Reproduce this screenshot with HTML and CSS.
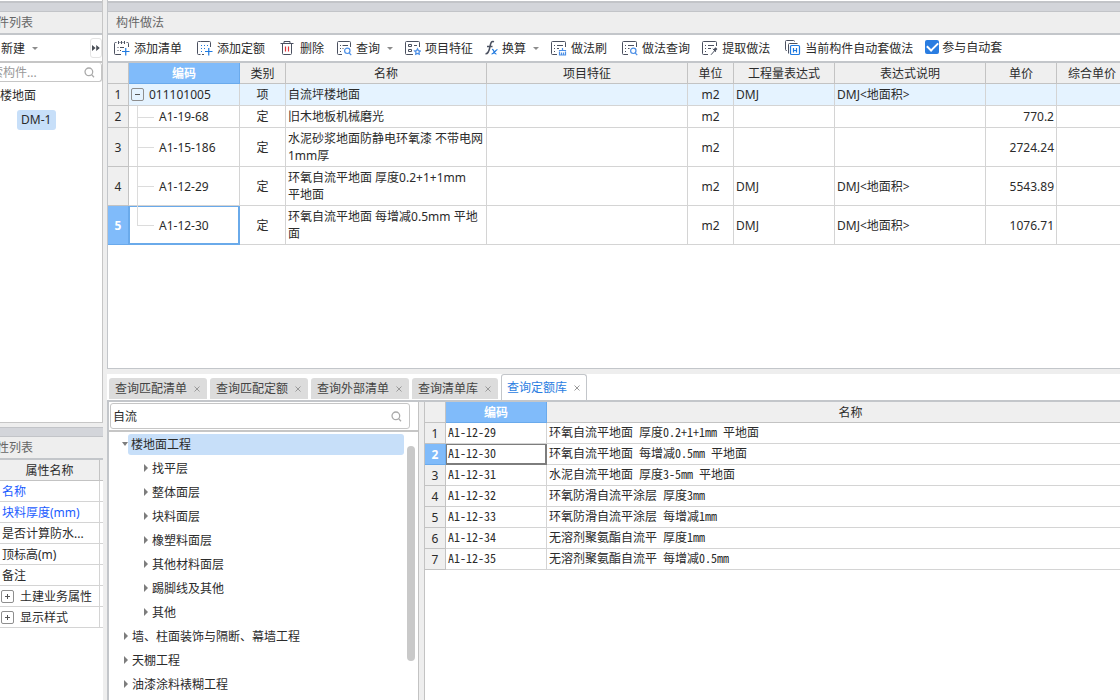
FILE: index.html
```html
<!DOCTYPE html>
<html lang="zh-CN">
<head>
<meta charset="utf-8">
<title>构件做法</title>
<link rel="stylesheet" href="styles.css">
</head>
<body>
<div class="app">
  <aside class="side">
    <section class="panel components">
      <div class="strip"></div>
      <h2 class="panel-title clipped">件列表</h2>
      <div class="new-row">
        <button class="tool" type="button">新建<span class="caret"></span></button>
        <button class="more" type="button" aria-label="更多"><svg width="8" height="6" viewBox="0 0 8 6"><path d="M0 0l3.6 3L0 6zM4.2 0l3.6 3-3.6 3z" fill="#4a4f57"/></svg></button>
      </div>
      <div class="side-search">
        <input type="text" placeholder="索构件..." aria-label="搜索构件">
        <svg width="11" height="11" viewBox="0 0 12 12" fill="none" stroke="#aaa" stroke-width="1.4"><circle cx="5.3" cy="5.3" r="4.2"/><path d="M8.3 8.3l2.6 2.9"/></svg>
      </div>
      <ul class="component-tree">
        <li>楼地面</li>
        <li class="child"><span class="picked">DM-1</span></li>
      </ul>
    </section>
    <section class="panel properties">
      <div class="strip low"></div>
      <h2 class="panel-title clipped">性列表</h2>
      <table class="prop-table">
        <thead><tr><th>属性名称</th><th class="rest"></th></tr></thead>
        <tbody>
          <tr><td class="key">名称</td><td></td></tr>
          <tr><td class="key">块料厚度(mm)</td><td></td></tr>
          <tr><td>是否计算防水...</td><td></td></tr>
          <tr><td>顶标高(m)</td><td></td></tr>
          <tr><td>备注</td><td></td></tr>
          <tr><td><div class="group"><button class="toggle plus" type="button" aria-label="展开"></button>土建业务属性</div></td><td></td></tr>
          <tr><td><div class="group"><button class="toggle plus" type="button" aria-label="展开"></button>显示样式</div></td><td></td></tr>
        </tbody>
      </table>
    </section>
  </aside>

  <main class="main">
    <section class="panel methods">
      <div class="strip"></div>
      <h2 class="panel-title">构件做法</h2>
      <div class="toolbar">
        <button class="tool wide" type="button"><svg class="ico" viewBox="0 0 16 16"><path d="M2.500 2.500h-1a1 1 0 0 0-1 1v10a1 1 0 0 0 1 1H7M12.500 2.500h1a1 1 0 0 1 1 1V7M4.500 1v3M7.500 1v3M10.500 1v3M5.500 2.500h1M8.500 2.500h1"/><path d="M3.500 7.500h1M6 7.500h4M3.500 10.500h1M6 10.500h1"/><path class="b" d="M8 11.500h7.500M11.750 8v7.500"/></svg>添加清单</button>
        <button class="tool wide" type="button"><svg class="ico" viewBox="0 0 16 16"><path d="M3.500 1.500h-2a1 1 0 0 0-1 1v11a1 1 0 0 0 1 1h2M5 14.500h2M3.500 1.500h9a1 1 0 0 1 1 1V7"/><path class="b" d="M4 5.500h1M7 5.500h1M10 5.500h1M4 8.500h1M7 8.500h1M4 11.500h1M8 11.500h7.500M11.750 8v7.500"/></svg>添加定额</button>
        <button class="tool" type="button"><svg class="ico" viewBox="0 0 16 16"><path d="M.500 3.500h13M4 3.500V1.500h6v2M2.500 3.500v10a1 1 0 0 0 1 1h7a1 1 0 0 0 1-1v-10"/><path class="r" d="M5.500 6.500v5M8.500 6.500v5"/></svg>删除</button>
        <button class="tool" type="button"><svg class="ico" viewBox="0 0 16 16"><path d="M6 14.500H2.500a1 1 0 0 1-1-1v-11a1 1 0 0 1 1-1h11a1 1 0 0 1 1 1V7M4 5.500h1M6.500 5.500h5.500M4 8.500h1M6.500 8.500h1M4 11.500h1"/><circle class="l" cx="11.300" cy="10.800" r="2.700"/><path class="l" d="M13.200 12.800l2 2.400"/></svg>查询<span class="caret"></span></button>
        <button class="tool" type="button"><svg class="ico" viewBox="0 0 16 16"><path d="M8 14.500H1.500a1 1 0 0 1-1-1v-11a1 1 0 0 1 1-1h12a1 1 0 0 1 1 1V7M3.500 4.500h3v2h-3zM3.500 9.500h3v2h-3zM9 5.500h3"/><path class="l" d="M12.500 8.800l.9 1.800 2 .3-1.400 1.400.3 2-1.800-.9-1.800.9.300-2-1.400-1.400 2-.3z"/></svg>项目特征</button>
        <button class="tool" type="button"><svg class="ico fx" viewBox="0 0 13 16"><path d="M9 1.800C6.300.8 5.600 3 5 6.500S3.500 14 .500 13.800M2 6.500h5.500"/><path class="b" d="M7 9.500c2-.8 2 5 4.500 4.500M12.500 9.500c-1.500 0-4 4.800-6 4.500"/></svg>换算<span class="caret"></span></button>
        <button class="tool wide" type="button"><svg class="ico" viewBox="0 0 16 16"><path d="M6 14.500H1.500a1 1 0 0 1-1-1v-11a1 1 0 0 1 1-1h12a1 1 0 0 1 1 1V7M3 5.500h1M6 5.500h6M3 8.500h1M6 8.500h2M3 11.500h1"/><path class="l" d="M11.500 8v2.500M8.500 11.500v-1h6v1M8.500 12v3h6v-3M10.500 12.500V15M12.500 12.500V15"/></svg>做法刷</button>
        <button class="tool" type="button"><svg class="ico" viewBox="0 0 16 16"><path d="M6 14.500H1.500a1 1 0 0 1-1-1v-11a1 1 0 0 1 1-1h12a1 1 0 0 1 1 1V7M3 5.500h1M6 5.500h6M3 8.500h1M6 8.500h1.500M3 11.500h1"/><circle class="l" cx="11.300" cy="10.800" r="2.700"/><path class="l" d="M13.200 12.800l2 2.400"/></svg>做法查询</button>
        <button class="tool wide" type="button"><svg class="ico" viewBox="0 0 16 16"><path d="M6 14.500H1.500a1 1 0 0 1-1-1v-11a1 1 0 0 1 1-1h12a1 1 0 0 1 1 1V6M3 5.500h1M6 5.500h6M3 8.500h1M6 8.500h3M3 11.500h1M9 14.800l3.500-4M10.800 8.800l3.200 3"/><path d="M12.200 10.500l2.300-2.300" stroke-width="2.600"/></svg>提取做法</button>
        <button class="tool" type="button"><svg class="ico" viewBox="0 0 16 16"><path d="M2 10.500h-.500a1 1 0 0 1-1-1v-8a1 1 0 0 1 1-1h7a1 1 0 0 1 1 1M3.500 13.500v-9a1 1 0 0 1 1-1h8"/><path class="b" d="M6.500 5.500h7a1 1 0 0 1 1 1v7a1 1 0 0 1-1 1h-7a1 1 0 0 1-1-1v-7a1 1 0 0 1 1-1zM8.500 8v4.500M11.500 8v4.500M8.500 10.500h3"/></svg>当前构件自动套做法</button>
        <label class="check"><input type="checkbox" checked>参与自动套</label>
      </div>
      <div class="grid-wrap">
        <table class="method-table">
          <colgroup><col class="c-num"><col class="c-code"><col class="c-unit"><col class="c-name"><col class="c-name"><col class="c-unit"><col class="c-expr"><col class="c-desc"><col class="c-price"><col class="c-price"></colgroup>
          <thead>
            <tr><th></th><th class="on">编码</th><th>类别</th><th>名称</th><th>项目特征</th><th>单位</th><th>工程量表达式</th><th>表达式说明</th><th>单价</th><th>综合单价</th></tr>
          </thead>
          <tbody>
            <tr class="parent"><th>1</th><td><div class="root-code"><button class="toggle" type="button" aria-label="折叠"></button>011101005</div></td><td class="mid">项</td><td>自流坪楼地面</td><td></td><td class="mid">m2</td><td>DMJ</td><td>DMJ&lt;地面积&gt;</td><td></td><td></td></tr>
            <tr><th>2</th><td class="leaf">A1-19-68</td><td class="mid">定</td><td>旧木地板机械磨光</td><td></td><td class="mid">m2</td><td></td><td></td><td class="num">770.2</td><td></td></tr>
            <tr class="tall"><th>3</th><td class="leaf">A1-15-186</td><td class="mid">定</td><td>水泥砂浆地面防静电环氧漆 不带电网 1mm厚</td><td></td><td class="mid">m2</td><td></td><td></td><td class="num">2724.24</td><td></td></tr>
            <tr class="tall"><th>4</th><td class="leaf">A1-12-29</td><td class="mid">定</td><td>环氧自流平地面 厚度0.2+1+1mm <span class="keep">平地面</span></td><td></td><td class="mid">m2</td><td>DMJ</td><td>DMJ&lt;地面积&gt;</td><td class="num">5543.89</td><td></td></tr>
            <tr class="tall"><th class="on">5</th><td class="leaf last focus">A1-12-30</td><td class="mid">定</td><td>环氧自流平地面 每增减0.5mm 平地面</td><td></td><td class="mid">m2</td><td>DMJ</td><td>DMJ&lt;地面积&gt;</td><td class="num">1076.71</td><td></td></tr>
          </tbody>
        </table>
      </div>
    </section>

    <section class="panel query">
      <nav class="tabs">
        <button class="tab" type="button">查询匹配清单<svg class="x" viewBox="0 0 6 6"><path d="M.5.5l5 5M5.500.5l-5 5"/></svg></button>
        <button class="tab" type="button">查询匹配定额<svg class="x" viewBox="0 0 6 6"><path d="M.5.5l5 5M5.500.5l-5 5"/></svg></button>
        <button class="tab" type="button">查询外部清单<svg class="x" viewBox="0 0 6 6"><path d="M.5.5l5 5M5.500.5l-5 5"/></svg></button>
        <button class="tab" type="button">查询清单库<svg class="x" viewBox="0 0 6 6"><path d="M.5.5l5 5M5.500.5l-5 5"/></svg></button>
        <button class="tab active" type="button">查询定额库<svg class="x" viewBox="0 0 6 6"><path d="M.5.5l5 5M5.500.5l-5 5"/></svg></button>
      </nav>
      <div class="query-body">
        <div class="catalog">
          <div class="catalog-search">
            <div class="search-box">
              <input type="text" value="自流" aria-label="查询">
              <svg width="11" height="11" viewBox="0 0 12 12" fill="none" stroke="#aaa" stroke-width="1.4"><circle cx="5.300" cy="5.300" r="4.200"/><path d="M8.300 8.300l2.600 2.900"/></svg>
            </div>
          </div>
          <div class="catalog-list">
            <ul class="tree">
              <li class="open"><span class="picked">楼地面工程</span></li>
              <li class="sub">找平层</li>
              <li class="sub">整体面层</li>
              <li class="sub">块料面层</li>
              <li class="sub">橡塑料面层</li>
              <li class="sub">其他材料面层</li>
              <li class="sub">踢脚线及其他</li>
              <li class="sub">其他</li>
              <li>墙、柱面装饰与隔断、幕墙工程</li>
              <li>天棚工程</li>
              <li>油漆涂料裱糊工程</li>
            </ul>
            <div class="scroll"><div class="thumb"></div></div>
          </div>
        </div>
        <div class="results">
          <table class="result-table">
            <colgroup><col class="c-num"><col class="c-expr"><col class="c-title"></colgroup>
            <thead><tr><th></th><th class="on">编码</th><th>名称</th></tr></thead>
            <tbody>
              <tr><th>1</th><td>A1-12-29</td><td>环氧自流平地面 厚度0.2+1+1mm 平地面</td></tr>
              <tr><th class="on">2</th><td class="focus">A1-12-30</td><td>环氧自流平地面 每增减0.5mm 平地面</td></tr>
              <tr><th>3</th><td>A1-12-31</td><td>水泥自流平地面 厚度3-5mm 平地面</td></tr>
              <tr><th>4</th><td>A1-12-32</td><td>环氧防滑自流平涂层 厚度3mm</td></tr>
              <tr><th>5</th><td>A1-12-33</td><td>环氧防滑自流平涂层 每增减1mm</td></tr>
              <tr><th>6</th><td>A1-12-34</td><td>无溶剂聚氨酯自流平 厚度1mm</td></tr>
              <tr><th>7</th><td>A1-12-35</td><td>无溶剂聚氨酯自流平 每增减0.5mm</td></tr>
            </tbody>
          </table>
        </div>
      </div>
    </section>
  </main>
</div>
</body>
</html>
```
FILE: styles.css
```css
* { box-sizing: border-box; }
html, body { height: 100%; margin: 0; }
body {
  font: 12px/17px "Noto Sans", "Noto Sans CJK SC", sans-serif;
  color: #2b2b2b;
  background: #eee;
  overflow: hidden;
}
button, input { font: inherit; color: inherit; }
button { border: 0; background: none; padding: 0; }
ul { list-style: none; margin: 0; padding: 0; }
h2 { margin: 0; font-weight: 400; font-size: 12px; }

.app {
  display: grid;
  grid-template-columns: 103px minmax(0, 1fr);
  column-gap: 4px;
  height: 100vh;
}
.side { display: grid; grid-template-rows: minmax(0, 423fr) minmax(0, 273fr); row-gap: 4px; min-height: 0; }
.main { display: grid; grid-template-rows: minmax(0, 369fr) minmax(0, 326fr); row-gap: 5px; min-height: 0; }
.panel { background: #fff; overflow: hidden; display: flex; flex-direction: column; }
.components { border-right: 1px solid #c6c6c6; border-bottom: 1px solid #c6c6c6; }
.methods { border-left: 1px solid #c3c6ca; border-bottom: 1px solid #c3c6ca; }

.strip {
  flex: none;
  height: 11px;
  margin-top: 1px;
  background: #d3d5da;
  border-top: 2px solid #c2c4c8;
  border-bottom: 1px solid #c2c4c8;
}
.strip.low { margin-top: 0; height: 10px; border-top-width: 1px; }
.panel-title {
  flex: none;
  height: 23px;
  padding: 1px 8px 0;
  background: #eee;
  border-bottom: 2px solid #c3c6ca;
  color: #666;
  line-height: 19px;
}
.panel-title.clipped { padding-left: 0; text-indent: -3px; }

/* component list */
.new-row {
  flex: none;
  display: flex;
  align-items: center;
  justify-content: space-between;
  height: 28px;
  padding-left: 1px;
  border-bottom: 2px solid #c6c6c6;
}
.more {
  width: 12px;
  height: 20px;
  display: flex;
  align-items: center;
  justify-content: center;
  border: 1px solid #e4e4e4;
  border-radius: 3px;
}
.side-search {
  flex: none;
  display: flex;
  align-items: center;
  height: 19px;
  padding-right: 6px;
  border: 1px solid #c6c6c6;
  border-left: 0;
  border-top: 0;
  border-radius: 0 3px 3px 0;
}
.side-search input {
  flex: 1;
  min-width: 0;
  padding: 0;
  border: 0;
  outline: 0;
  background: none;
  text-indent: -9px;
}
.side-search input::placeholder { color: #999; }
.component-tree { padding-top: 2px; line-height: 24px; }
.component-tree .child { padding-left: 17px; }
.picked { background: #c7dff9; border-radius: 3px; }
.component-tree .picked { display: inline-block; padding: 0 5px 0 4px; line-height: 20px; }

/* toolbar */
.toolbar {
  flex: none;
  display: flex;
  align-items: center;
  gap: 12px;
  height: 28px;
  padding-left: 6px;
  border-bottom: 2px solid #c3c6ca;
  white-space: nowrap;
}
.tool { display: flex; align-items: center; gap: 4px; flex: none; }
.tool.wide { margin-right: 3px; }
.caret {
  margin-left: 3px;
  border: 3px solid transparent;
  border-top-color: #8c8c8c;
  border-bottom: 0;
}
.ico { width: 16px; height: 16px; fill: none; stroke: #4b5160; stroke-width: 1; }
.ico.fx { width: 13px; stroke-width: 1.5; }
.ico .b { stroke: #1f7ae0; stroke-width: 1.2; }
.ico .l { stroke: #4c8fe6; stroke-width: 1.2; }
.ico .r { stroke: #e0353b; stroke-width: 1.2; }
.check { display: flex; align-items: center; gap: 3px; padding-bottom: 2px; }
.check input {
  appearance: none;
  width: 14px;
  height: 14px;
  margin: 0;
  border-radius: 2px;
  background: #2a7de1;
  display: grid;
  place-items: center;
}
.check input:checked::before {
  content: "";
  width: 9px;
  height: 5px;
  border: solid #fff;
  border-width: 0 0 2px 2px;
  transform: rotate(-45deg);
  margin-bottom: 3px;
}

/* tables */
table { border-collapse: separate; border-spacing: 0; table-layout: fixed; }
th, td {
  height: 22px;
  padding: 0 2px;
  border-right: 1px solid #d4d4d4;
  border-bottom: 1px solid #d4d4d4;
  text-align: left;
  vertical-align: middle;
  font-weight: 400;
}
th { background: #efefef; border-color: #c3c3c3; text-align: center; padding: 0; }
thead th { height: 21px; }
th.on { background: #80bbfa; border-color: #6aaaec; color: #fff; font-weight: 700; }
.mid { text-align: center; }
.num { text-align: right; }
.keep { white-space: nowrap; }
.c-num { width: 21px; }
.c-code { width: 111px; }
.c-unit { width: 46px; }
.c-name { width: 201px; }
.c-expr { width: 101px; }
.c-desc { width: 151px; }
.c-price { width: 71px; }
.c-title { width: 608px; }

.grid-wrap, .results { overflow: hidden; min-width: 0; }
.method-table { width: 1020px; }
.tall > * { height: 39px; }
.parent td { background: #e5f3ff; }
.root-code, .group { display: flex; align-items: center; gap: 5px; }
.toggle {
  position: relative;
  flex: none;
  width: 13px;
  height: 13px;
  border: 1px solid #8e8e8e;
  border-radius: 2px;
}
.toggle::before, .toggle.plus::after {
  content: "";
  position: absolute;
  left: 3px;
  top: 5px;
  width: 5px;
  height: 1px;
  background: #555;
}
.toggle.plus::after { left: 5px; top: 3px; width: 1px; height: 5px; }

/* tree guides inside the code column */
.leaf { position: relative; padding-left: 30px; }
.leaf::before, .leaf::after {
  content: "";
  position: absolute;
  left: 8px;
  background: #dcdcdc;
}
.leaf::before { top: 0; bottom: 0; width: 1px; }
.leaf::after { top: 50%; width: 17px; height: 1px; }
.leaf.last::before { bottom: 50%; }
.method-table .focus { box-shadow: inset 0 0 0 1px #6aaaea; border-color: #6aaaea; }

/* property list */
.prop-table { width: 103px; }
.prop-table th:first-child { width: 100px; }
.prop-table th, .prop-table td { height: 21px; white-space: nowrap; }
.prop-table td:first-child { padding-right: 0; }
.prop-table tr > :last-child { border-right: 0; padding: 0; }
.prop-table .key { color: #1a5cff; }
.prop-table .toggle { margin-left: -1px; }
.group { gap: 6px; }

/* query tabs */
.tabs {
  flex: none;
  display: flex;
  align-items: flex-end;
  gap: 3px;
  height: 28px;
  padding-left: 2px;
  border-bottom: 2px solid #c3c6ca;
}
.tab {
  display: flex;
  align-items: center;
  gap: 7px;
  height: 21px;
  margin-bottom: 1px;
  padding: 0 7px 0 6px;
  border-radius: 3px 3px 0 0;
  background: #dcdcdc;
  color: #444;
  white-space: nowrap;
}
.tab.active {
  height: 26px;
  margin-bottom: 0;
  padding: 0 6px 0 5px;
  border: 1px solid #c3c6ca;
  border-bottom: 0;
  background: #fff;
  color: #2a7de1;
}
.x { width: 6px; height: 6px; fill: none; stroke: #999; stroke-width: 1; }

.query-body {
  flex: 1;
  min-height: 0;
  display: grid;
  grid-template-columns: 312px minmax(0, 1fr);
  background: linear-gradient(#eee, #eee) 312px 0 / 5px 100% no-repeat;
}
.catalog {
  display: flex;
  flex-direction: column;
  min-height: 0;
  border-left: 2px solid #c3c6ca;
  border-right: 1px solid #c3c3c3;
}
.catalog-search { flex: none; height: 30px; padding: 1px 8px 2px 1px; border-bottom: 2px solid #c6c6c6; }
.search-box {
  display: flex;
  align-items: center;
  height: 26px;
  padding: 0 7px 0 2px;
  border: 1px solid #c6c6c6;
  border-radius: 3px;
}
.search-box input { flex: 1; min-width: 0; padding: 0; border: 0; outline: 0; background: none; }
.catalog-list { flex: 1; min-height: 0; display: flex; overflow: hidden; }
.tree { flex: 1; padding-left: 15px; }
.tree li { display: flex; align-items: center; height: 24px; }
.tree li::before {
  content: "";
  margin-right: 4px;
  border: 4px solid transparent;
  border-left: 4px solid #7d7d7d;
  border-right: 0;
}
.tree .sub { padding-left: 20px; }
.tree .open::before { margin: 0 0 0 -2px; border: 3px solid transparent; border-top: 4px solid #7d7d7d; border-bottom: 0; }
.tree .picked { flex: 1; height: 21px; padding-left: 3px; line-height: 21px; }
.scroll { width: 14px; padding: 14px 3px 0; }
.thumb { width: 8px; height: 215px; border-radius: 4px; background: #c9c9c9; }

.results { margin-left: 5px; border-left: 1px solid #c3c3c3; background: #fff; }
.result-table { width: 730px; }
.result-table th, .result-table td { height: 21px; }
.result-table td {
  padding-bottom: 3px;
  font-family: "Noto Sans CJK SC", sans-serif;
  font-feature-settings: "hwid";
}
.result-table .focus { box-shadow: inset 0 0 0 1px #7d7d7d; border-color: #7d7d7d; }
```
